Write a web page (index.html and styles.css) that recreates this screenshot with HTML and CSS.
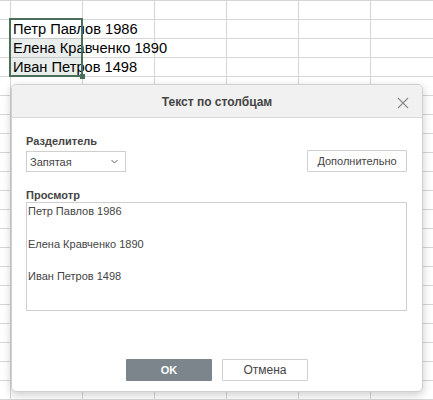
FILE: index.html
```html
<!DOCTYPE html>
<html lang="ru">
<head>
<meta charset="utf-8">
<title>Текст по столбцам</title>
<link rel="stylesheet" href="styles.css">
</head>
<body>
<div class="sheet">
  <div class="cells">
    <div class="cell">Петр Павлов 1986</div>
    <div class="cell sel">Елена Кравченко 1890</div>
    <div class="cell sel">Иван Петров 1498</div>
  </div>
  <div class="selection"></div>
  <div class="handle"></div>
</div>

<div class="dialog">
  <div class="header">
    <span class="title">Текст по столбцам</span>
    <svg class="close" width="12" height="12" viewBox="0 0 12 12"><path d="M1 1L11 11M11 1L1 11" stroke="#8a8a8a" stroke-width="1.1" fill="none"/></svg>
  </div>
  <div class="body">
    <div class="row">
      <div class="field">
        <div class="label">Разделитель</div>
        <div class="select">
          <span>Запятая</span>
          <svg width="7" height="5" viewBox="0 0 7 5"><path d="M0.5 1L3.5 4L6.5 1" stroke="#666" stroke-width="1" fill="none"/></svg>
        </div>
      </div>
      <div class="btn more">Дополнительно</div>
    </div>
    <div class="label preview-label">Просмотр</div>
    <div class="preview">
      <div class="pline">Петр Павлов 1986</div>
      <div class="pline">Елена Кравченко 1890</div>
      <div class="pline">Иван Петров 1498</div>
    </div>
  </div>
  <div class="footer">
    <div class="btn primary">OK</div>
    <div class="btn cancel">Отмена</div>
  </div>
</div>
</body>
</html>
```
FILE: styles.css
```css
html, body {
  margin: 0;
  padding: 0;
  width: 433px;
  height: 400px;
  overflow: hidden;
  background: #fff;
}

.sheet {
  position: relative;
  width: 433px;
  height: 400px;
  background-color: #fff;
  background-image:
    linear-gradient(to bottom, #d6d6d6 1px, transparent 1px),
    linear-gradient(to right, #d6d6d6 1px, transparent 1px);
  background-size: 100% 19px, 72px 100%;
  background-position: 0 0, 10px 0;
  font-family: "Liberation Sans", Arial, sans-serif;
}

.cells {
  padding-top: 19px;
  padding-left: 10px;
}

.cell {
  width: 72px;
  height: 19px;
  box-sizing: border-box;
  padding: 1px 0 0 3px;
  font-size: 14.67px;
  line-height: 19px;
  color: #000;
  white-space: nowrap;
  overflow: visible;
}

.cell.sel {
  background: rgba(75, 110, 90, 0.12);
}

.selection {
  position: absolute;
  left: 9px;
  top: 18px;
  width: 74px;
  height: 59px;
  box-sizing: border-box;
  border: 2px solid #4b6e5a;
}

.handle {
  position: absolute;
  left: 80px;
  top: 74px;
  width: 5px;
  height: 5px;
  background: #4b6e5a;
}

.dialog {
  position: absolute;
  left: 11px;
  top: 84px;
  width: 412px;
  height: 308px;
  box-sizing: border-box;
  border: 1px solid #cfcfcf;
  border-radius: 5px;
  background: #fff;
  box-shadow: 0 3px 10px rgba(0, 0, 0, 0.2);
  display: flex;
  flex-direction: column;
  overflow: hidden;
  font-family: "Liberation Sans", Arial, sans-serif;
  color: #444;
}

.header {
  position: relative;
  height: 33px;
  box-sizing: border-box;
  background: #f1f1f1;
  border-bottom: 1px solid #d9d9d9;
  display: flex;
  align-items: center;
  justify-content: center;
}

.title {
  font-size: 12px;
  font-weight: bold;
  color: #444;
  padding-top: 2px;
}

.close {
  position: absolute;
  right: 13px;
  top: 12px;
}

.body {
  padding: 16px 15px 0 14px;
}

.row {
  display: flex;
  justify-content: space-between;
  align-items: flex-end;
}

.label {
  font-size: 11px;
  font-weight: bold;
  line-height: 14px;
  color: #444;
}

.field .label {
  margin-bottom: 3px;
}

.select {
  width: 100px;
  height: 21px;
  box-sizing: border-box;
  border: 1px solid #cfcfcf;
  display: flex;
  align-items: center;
  justify-content: space-between;
  padding: 0 7px 0 3px;
  font-size: 11px;
  color: #444;
}

.btn {
  box-sizing: border-box;
  display: flex;
  align-items: center;
  justify-content: center;
  font-size: 11px;
  border-radius: 1px;
}

.more {
  width: 100px;
  height: 22px;
  border: 1px solid #cfcfcf;
  color: #444;
}

.preview-label {
  margin-top: 16px;
}

.preview {
  height: 109px;
  box-sizing: border-box;
  border: 1px solid #cfcfcf;
  padding: 0 0 0 1px;
  font-size: 11px;
  color: #444;
}

.pline {
  line-height: 16px;
  margin-bottom: 16.5px;
}

.footer {
  margin-top: auto;
  padding-bottom: 10px;
  display: flex;
  justify-content: center;
  gap: 10px;
}

.primary {
  width: 86px;
  height: 22px;
  background: #7d858c;
  color: #fff;
  font-weight: bold;
  font-size: 11px;
}

.cancel {
  width: 86px;
  height: 22px;
  border: 1px solid #cfcfcf;
  background: #fff;
  color: #444;
  font-size: 12px;
}
```
